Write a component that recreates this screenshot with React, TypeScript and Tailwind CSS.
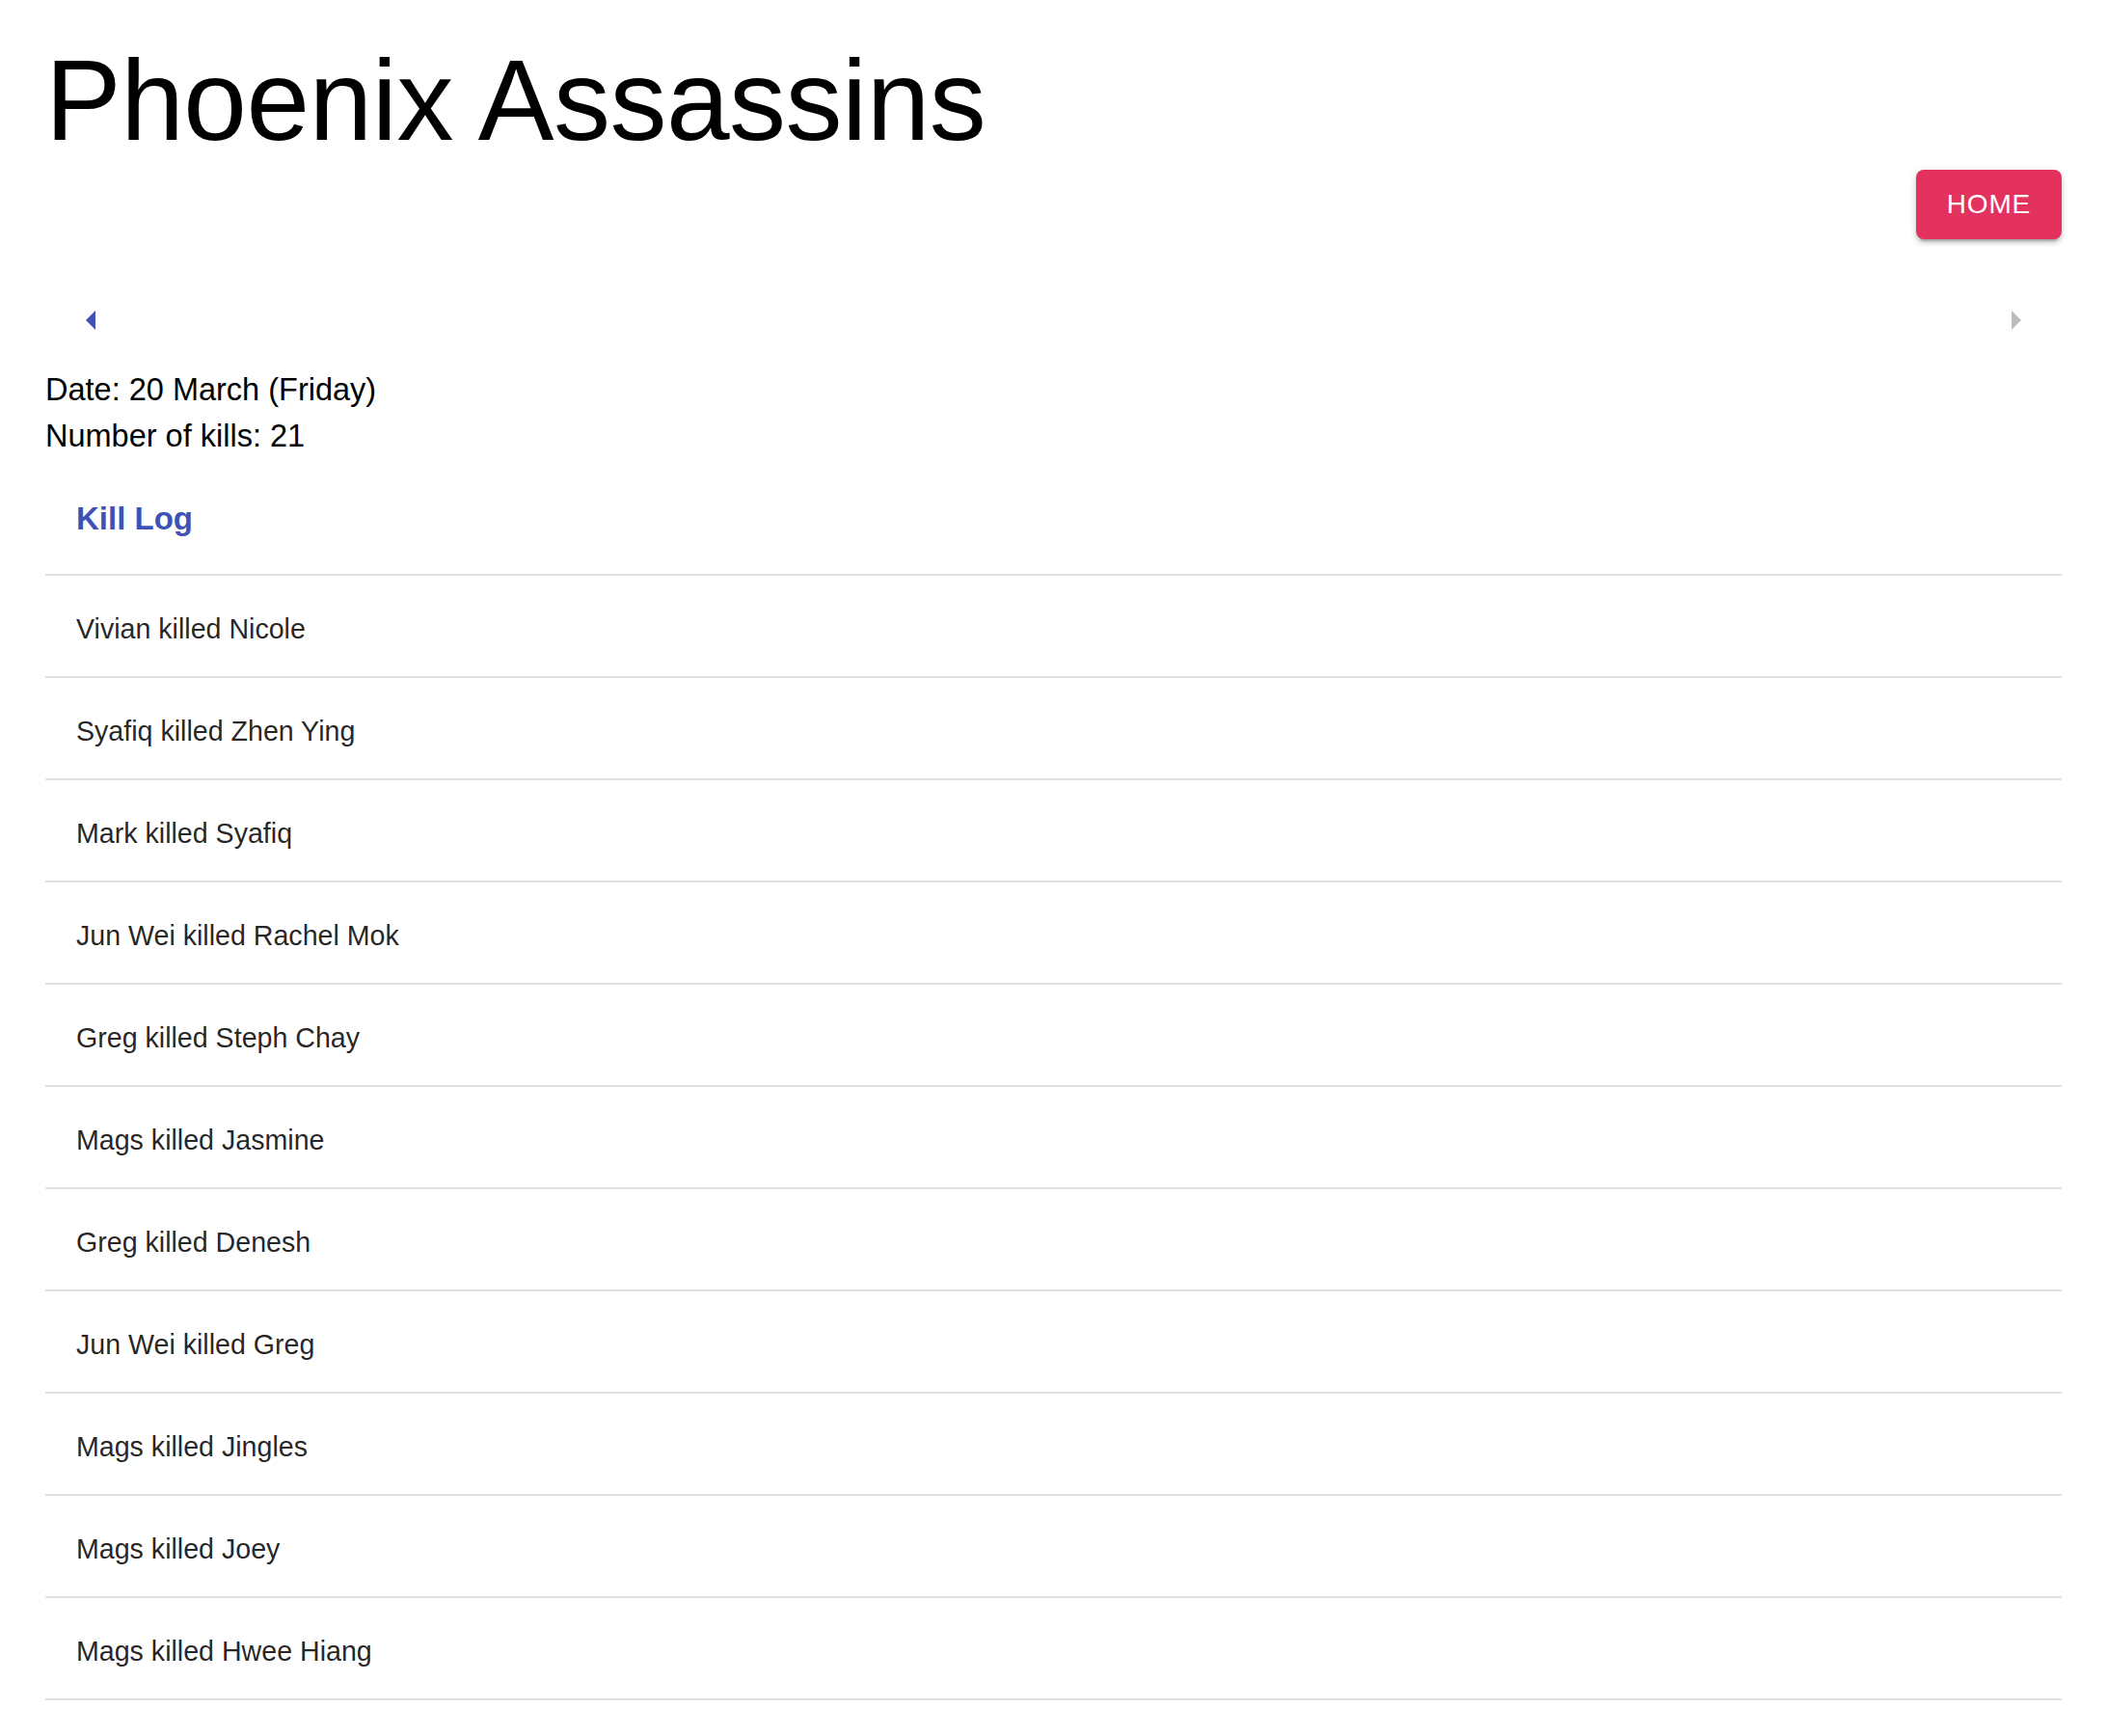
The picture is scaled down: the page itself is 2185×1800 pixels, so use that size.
import React from 'react';

const kills = [
  'Vivian killed Nicole',
  'Syafiq killed Zhen Ying',
  'Mark killed Syafiq',
  'Jun Wei killed Rachel Mok',
  'Greg killed Steph Chay',
  'Mags killed Jasmine',
  'Greg killed Denesh',
  'Jun Wei killed Greg',
  'Mags killed Jingles',
  'Mags killed Joey',
  'Mags killed Hwee Hiang',
];

function ArrowLeft({ className }: { className?: string }) {
  return (
    <svg viewBox="0 0 24 24" className={className} fill="currentColor">
      <path d="M14 7l-5 5 5 5z" />
    </svg>
  );
}

function ArrowRight({ className }: { className?: string }) {
  return (
    <svg viewBox="0 0 24 24" className={className} fill="currentColor">
      <path d="M10 17l5-5-5-5v10z" />
    </svg>
  );
}

export default function App() {
  return (
    <div className="min-h-screen bg-white px-[47px] pt-[32px] font-['Liberation_Sans',Arial,sans-serif]">
      <h1 className="text-[118px] leading-[144px] font-normal text-black tracking-[-0.5px]">
        Phoenix Assassins
      </h1>

      <div className="flex justify-end">
        <button className="h-[72px] px-8 rounded-[8px] bg-[#e3325d] text-white text-[28px] tracking-[0.8px] uppercase shadow-[0_6px_2px_-4px_rgba(0,0,0,0.2),0_4px_4px_0_rgba(0,0,0,0.14),0_2px_10px_0_rgba(0,0,0,0.12)]">
          Home
        </button>
      </div>

      <div className="mt-[36px] flex justify-between">
        <button className="p-6 text-[#3f51b5]">
          <ArrowLeft className="w-12 h-12" />
        </button>
        <button className="p-6 text-[#bdbdbd]">
          <ArrowRight className="w-12 h-12" />
        </button>
      </div>

      <div className="text-[32.5px] leading-[48px] text-black">
        <p>Date: 20 March (Friday)</p>
        <p>Number of kills: 21</p>
      </div>

      {/* subheader sits a bit high in its 96px box */}
      <div className="mt-[25px] h-[96px] leading-[74px] px-8 text-[33px] font-bold text-[#3f51b5] border-b-2 border-[#e0e0e0]">
        Kill Log
      </div>

      <ul>
        {kills.map((k) => (
          <li
            key={k}
            className="h-[106px] flex items-center px-8 pt-[6px] border-b-2 border-[#e0e0e0] text-[28.6px] text-[rgba(0,0,0,0.87)]"
          >
            {k}
          </li>
        ))}
      </ul>
    </div>
  );
}
